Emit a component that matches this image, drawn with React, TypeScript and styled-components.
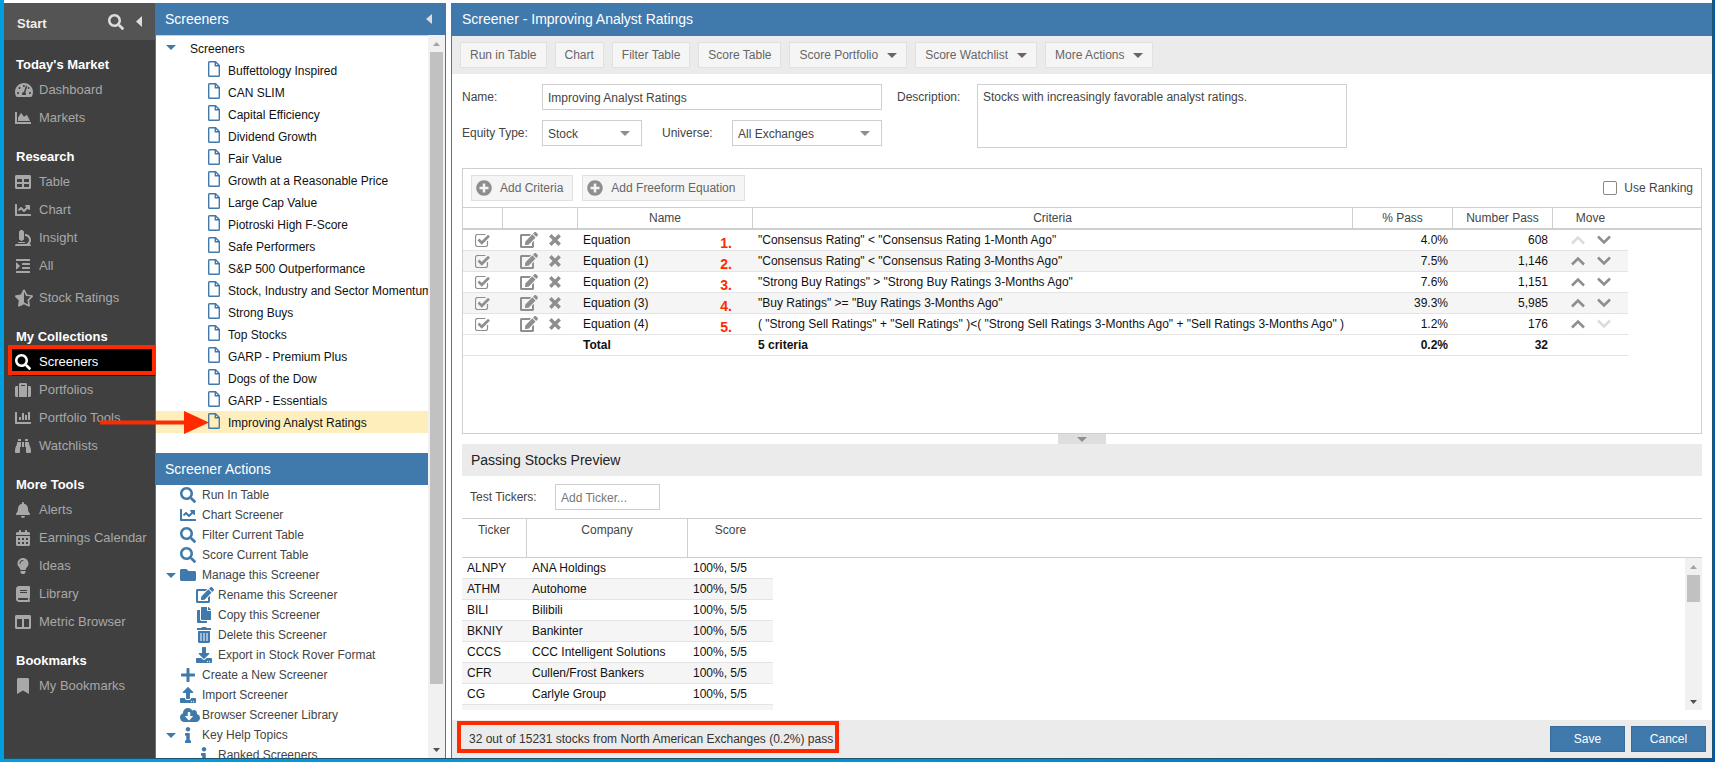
import React from "react";
import styled, { createGlobalStyle, css } from "styled-components";
import type { IconType } from "react-icons";
import {
  FaSearch, FaTachometerAlt, FaChartArea, FaTable, FaChartLine, FaMicroscope, FaIndent, FaStarHalfAlt,
  FaSuitcase, FaChartBar, FaBinoculars, FaBell, FaCalendarAlt, FaLightbulb, FaBook, FaColumns, FaBookmark,
  FaEdit, FaCopy, FaDownload, FaUpload, FaCloudDownloadAlt, FaInfo, FaPlus, FaFolder, FaPlusCircle,
} from "react-icons/fa";

const blue = "#4079ac";
const line = "#cfcfcf";
const red = "#ff2a00";

const GlobalStyle = createGlobalStyle`
  *, *::before, *::after { box-sizing: border-box; }
  body {
    margin: 0;
    overflow: hidden;
    font: 12px/20px "Liberation Sans", Arial, sans-serif;
    color: #444;
  }
  button, input, select, textarea { font: inherit; color: inherit; margin: 0; }
  svg { display: block; flex: none; }
`;

const Desktop = styled.div`
  height: 100vh;
  padding: 0 2px 3px 4px;
  background: linear-gradient(90deg, #009fe0, #0090cc 60%, #0058b0);
`;

const Window = styled.div`
  position: relative;
  height: 100%;
  display: grid;
  grid-template-columns: 151px 291px minmax(0, 1fr);
  padding-top: 3px;
  background: #fff;
  border: solid #1f5570;
  border-width: 0 1px 1px 0;
`;

/* Left navigation */

const Sidebar = styled.nav`
  position: relative;
  background: #404040;
  font-size: 13px;
`;

const StartBar = styled.div`
  height: 37px;
  display: flex;
  align-items: center;
  padding: 4px 13px 0 13px;
  background: #545454;
  color: #eee;
  font-weight: bold;
`;

const IconButton = styled.button`
  padding: 0;
  border: 0;
  background: none;
  color: #ddd;
  display: flex;
  cursor: pointer;
`;

const StartActions = styled.div`
  margin-left: auto;
  display: flex;
  align-items: center;
  gap: 12px;
  padding-bottom: 4px;
`;

const NavBody = styled.div`
  display: flex;
  flex-direction: column;
  gap: 14px;
  padding-top: 14px;
`;

const NavTitle = styled.h2`
  margin: 0;
  padding-left: 12px;
  font-size: 13px;
  line-height: 22px;
  color: #fff;
`;

const NavLink = styled.a<{ $active?: boolean; $spaced?: boolean }>`
  position: relative;
  height: 28px;
  display: flex;
  align-items: center;
  gap: 8px;
  margin-left: 8px;
  padding-left: 3px;
  color: #a8a8a8;
  text-decoration: none;
  white-space: nowrap;
  ${(p) => p.$spaced && css`margin-top: 4px;`}
  ${(p) => p.$active && css`background: #000; color: #fff;`}
`;

const HighlightBox = styled.span`
  position: absolute;
  border: 4px solid ${red};
  pointer-events: none;
`;

const NavHighlight = styled(HighlightBox)`
  inset: -3px -1px 1px -4px;
`;

const PointerArrow = styled.svg`
  position: absolute;
  left: 88px;
  top: 0;
  z-index: 1;
  pointer-events: none;
`;

/* Screener tree */

const TreePanel = styled.section`
  display: flex;
  flex-direction: column;
  min-height: 0;
  border: solid ${blue};
  border-width: 0 1px;
`;

const PanelTitle = styled.h2`
  margin: 0;
  height: 32px;
  flex: none;
  display: flex;
  align-items: center;
  justify-content: space-between;
  padding: 0 13px 0 9px;
  background: ${blue};
  color: #fff;
  font-size: 14px;
  font-weight: normal;
`;

const TreeScroll = styled.div`
  flex: 1;
  min-height: 0;
  display: grid;
  grid-template-columns: minmax(0, 1fr) 17px;
`;

const TreeContent = styled.div`
  min-height: 0;
  overflow: hidden;
  padding-top: 1px;
  border-top: 1px solid ${line};
`;

const TreeList = styled.ul`
  list-style: none;
  margin: 0;
  padding: 0 0 20px;
`;

const TreeRow = styled.li<{ $root?: boolean; $selected?: boolean }>`
  height: 22px;
  display: flex;
  align-items: center;
  gap: ${(p) => (p.$root ? 14 : 8)}px;
  padding-left: ${(p) => (p.$root ? 10 : 52)}px;
  background: ${(p) => (p.$selected ? "#feeebb" : "transparent")};
  color: #111;
  line-height: 22px;
  white-space: nowrap;
  & > svg { color: ${blue}; margin-bottom: 2px; }
`;

const TreeText = styled.span`
  padding-top: 1px;
`;

const ActionList = styled.ul`
  list-style: none;
  margin: 0;
  padding: 0;
`;

const ActionRow = styled.li<{ $depth: number }>`
  height: 20px;
  display: flex;
  align-items: center;
  padding-left: ${(p) => 10 + p.$depth * 16}px;
  white-space: nowrap;
`;

const Slot = styled.span<{ $w: number; $color?: string }>`
  width: ${(p) => p.$w}px;
  flex: none;
  display: flex;
  align-items: center;
  color: ${(p) => p.$color || "inherit"};
`;

const ActionLink = styled.a`
  padding-left: 6px;
  color: #444;
  text-decoration: none;
`;

const Track = styled.div`
  display: flex;
  flex-direction: column;
  align-items: center;
  background: #f1f1f1;
`;

const ArrowCell = styled.span<{ $down?: boolean }>`
  height: 17px;
  display: flex;
  align-items: center;
  color: ${(p) => (p.$down ? "#505050" : "#a3a3a3")};
`;

const Thumb = styled.span<{ $size: string }>`
  width: 13px;
  height: ${(p) => p.$size};
  margin-bottom: auto;
  background: #c1c1c1;
`;

/* Editor */

const Main = styled.main`
  display: flex;
  flex-direction: column;
  min-width: 0;
  min-height: 0;
  margin-left: 5px;
  border-left: 1px solid ${blue};
`;

const MainTitle = styled.h1`
  margin: 0;
  padding: 0 10px;
  flex: none;
  background: ${blue};
  color: #fff;
  font-size: 14px;
  font-weight: normal;
  line-height: 33px;
`;

const Toolbar = styled.div`
  height: 38px;
  flex: none;
  display: flex;
  align-items: center;
  gap: 8px;
  padding-left: 8px;
  background: #ebebeb;
`;

const ToolButton = styled.button`
  height: 26px;
  display: flex;
  align-items: center;
  gap: 9px;
  padding: 0 9px;
  border: 1px solid #e1e1e1;
  background: #f5f5f5;
  color: #666;
  white-space: nowrap;
  cursor: pointer;
`;

const AddButton = styled(ToolButton)`
  gap: 8px;
  padding: 0 9px 0 4px;
  & > svg { color: #8e8e8e; }
`;

const Form = styled.form`
  display: flex;
  align-items: flex-start;
  padding: 10px 10px 20px;
`;

const Fields = styled.div`
  display: grid;
  grid-template-columns: 80px 100px 90px 150px;
  row-gap: 10px;
`;

const FieldLabel = styled.label<{ $indent?: number; $w?: number }>`
  width: ${(p) => (p.$w ? `${p.$w}px` : "auto")};
  padding-left: ${(p) => p.$indent || 0}px;
  line-height: 26px;
`;

const TextInput = styled.input`
  height: 26px;
  min-width: 0;
  padding: 1px 5px 0;
  border: 1px solid ${line};
  background: #fff;
  outline: 0;
  &::placeholder { color: #777; opacity: 1; }
`;

const NameInput = styled(TextInput)`
  grid-column: 2 / -1;
`;

const TickerInput = styled(TextInput)`
  width: 105px;
`;

const SelectWrap = styled.span`
  position: relative;
  display: grid;
  & > svg {
    position: absolute;
    right: 12px;
    top: 11px;
    color: #8e8e8e;
    pointer-events: none;
  }
`;

const Select = styled.select`
  height: 26px;
  padding: 1px 5px 0;
  border: 1px solid ${line};
  border-radius: 0;
  background: #fff;
  appearance: none;
`;

const Description = styled.textarea`
  width: 370px;
  height: 64px;
  padding: 2px 5px;
  border: 1px solid ${line};
  resize: none;
  outline: 0;
`;

const CriteriaBox = styled.section`
  height: 266px;
  flex: none;
  margin: 0 10px;
  border: 1px solid ${line};
`;

const CriteriaBar = styled.div`
  height: 38px;
  display: flex;
  align-items: center;
  gap: 9px;
  padding: 0 8px;
`;

const Ranking = styled.label`
  display: flex;
  align-items: center;
  gap: 7px;
  margin-left: auto;
`;

const RankBox = styled.input`
  width: 14px;
  height: 14px;
  appearance: none;
  border: 1px solid #888;
  border-radius: 2px;
  background: #fff;
`;

const HeadBand = styled.div`
  height: 23px;
  margin-bottom: -23px;
  border-top: 1px solid ${line};
  border-bottom: 2px solid ${line};
`;

const Table = styled.table`
  position: relative;
  border-collapse: separate;
  border-spacing: 0;
  table-layout: fixed;
  color: #111;
  white-space: nowrap;
`;

const Th = styled.th<{ $h: number; $last?: boolean }>`
  height: ${(p) => p.$h}px;
  padding: 1px 0 0;
  border-right: ${(p) => (p.$last ? 0 : 1)}px solid ${line};
  color: #444;
  font-weight: normal;
  vertical-align: top;
`;

const Row = styled.tr`
  &:nth-child(even) { background: #f5f5f5; }
`;

const Td = styled.td<{ $right?: boolean; $bold?: boolean }>`
  position: relative;
  height: 21px;
  padding: 1px 5px 0;
  border-bottom: 1px solid #e4e4e4;
  line-height: 19px;
  text-align: ${(p) => (p.$right ? "right" : "left")};
  font-weight: ${(p) => (p.$bold ? "bold" : "normal")};
`;

const IconTd = styled(Td)`
  padding-top: 0;
`;

const Tools = styled.div<{ $gap: number; $pad: number }>`
  display: flex;
  align-items: center;
  gap: ${(p) => p.$gap}px;
  padding-left: ${(p) => p.$pad}px;
`;

const GreyButton = styled(IconButton)`
  color: #8e8e8e;
  &:disabled { color: #dcdcdc; }
`;

const Tick = styled.label`
  position: relative;
  display: flex;
  margin-left: 7px;
  color: #8e8e8e;
`;

const TickInput = styled.input`
  position: absolute;
  inset: 0;
  width: 15px;
  height: 13px;
  opacity: 0;
`;

const Marker = styled.span`
  position: absolute;
  right: 21px;
  top: 3px;
  color: ${red};
  font: bold 14px/20px "Liberation Sans", Arial, sans-serif;
`;

const SplitHandle = styled.button`
  align-self: center;
  flex: none;
  width: 48px;
  height: 10px;
  padding: 0;
  border: 0;
  background: #dedede;
  color: #8e8e8e;
  display: flex;
  align-items: center;
  justify-content: center;
`;

const PreviewTitle = styled.h2`
  flex: none;
  margin: 0 10px;
  padding: 0 9px;
  background: #ebebeb;
  color: #222;
  font-size: 14px;
  font-weight: normal;
  line-height: 32px;
`;

const TickerBar = styled.div`
  height: 42px;
  flex: none;
  display: grid;
  grid-template-columns: 85px auto;
  align-items: center;
  justify-content: start;
  padding-left: 18px;
`;

const Preview = styled.div`
  flex: 1;
  min-height: 0;
  margin: 0 10px 10px;
  display: grid;
  grid-template-rows: 40px minmax(0, 1fr);
`;

const PreviewHead = styled.div`
  border: solid ${line};
  border-width: 1px 0;
`;

const PreviewBody = styled.div`
  min-height: 0;
  display: grid;
  grid-template-columns: minmax(0, 1fr) 17px;
`;

const Clip = styled.div`
  min-height: 0;
  overflow: hidden;
`;

const Footer = styled.footer`
  height: 38px;
  flex: none;
  display: flex;
  align-items: center;
  gap: 6px;
  padding: 0 6px 0 17px;
  background: #ebebeb;
  color: #333;
`;

const Status = styled.span`
  position: relative;
  margin-right: auto;
`;

const StatusHighlight = styled(HighlightBox)`
  inset: -8px -6px -4px -12px;
`;

const PrimaryButton = styled.button`
  width: 75px;
  height: 26px;
  border: 1px solid #366d9f;
  background: ${blue};
  color: #fff;
  cursor: pointer;
`;

const Triangle = ({ dir = "down", w = 9, h = 5 }: { dir?: "down" | "up" | "left"; w?: number; h?: number }) => {
  const points = {
    down: `0,0 ${w},0 ${w / 2},${h}`,
    up: `0,${h} ${w},${h} ${w / 2},0`,
    left: `${w},0 ${w},${h} 0,${h / 2}`,
  }[dir];
  return (
    <svg width={w} height={h} viewBox={`0 0 ${w} ${h}`} fill="currentColor" aria-hidden="true">
      <polygon points={points} />
    </svg>
  );
};

const CheckIcon = () => (
  <svg width="15" height="13" viewBox="0 0 15 13" fill="none" stroke="currentColor" aria-hidden="true">
    <path d="M12.5 7v3.5a2 2 0 0 1-2 2h-8a2 2 0 0 1-2-2v-8a2 2 0 0 1 2-2h8" strokeWidth="1.2" />
    <path d="M3.5 5.5 6.8 8.8 14 1.8" strokeWidth="2.6" />
  </svg>
);

const CrossIcon = () => (
  <svg width="12" height="12" viewBox="0 0 12 12" fill="none" stroke="currentColor" strokeWidth="3.4" aria-hidden="true">
    <path d="M1.300 1.300 10.700 10.700M10.700 1.300 1.300 10.700" />
  </svg>
);

const Chevron = ({ up }: { up?: boolean }) => (
  <svg width="14" height="10" viewBox="0 0 14 10" fill="none" stroke="currentColor" strokeWidth="2.6" aria-hidden="true">
    <path d={up ? "M1 8.500 7 2.500 13 8.500" : "M1 1.500 7 7.500 13 1.500"} />
  </svg>
);

const FileIcon = () => (
  <svg width="12" height="16" viewBox="0 0 12 16" fill="none" stroke="currentColor" strokeWidth="1.4" aria-hidden="true">
    <path d="M1.500.7H7.500L11.300 4.500V14.500Q11.300 15.300 10.500 15.300H1.500Q.7 15.300.7 14.500V1.500Q.7.700 1.500.700Z" />
    <path d="M7.300.7V4.700H11.300" />
  </svg>
);

const TrashIcon = () => (
  <svg width="16" height="16" viewBox="-1 0 16 16" fill="currentColor" aria-hidden="true">
    <path fillRule="evenodd" d="M5 0h4l.6 1H14v2H0V1h4.400zM1 4h12v10.500a1.500 1.500 0 0 1-1.500 1.500h-9A1.500 1.500 0 0 1 1 14.500zM3.500 6v8h1V6zM6.500 6v8h1V6zM9.500 6v8h1V6z" />
  </svg>
);

const Scrollbar = ({ size }: { size: string }) => (
  <Track aria-hidden="true">
    <ArrowCell><Triangle dir="up" w={7} h={4} /></ArrowCell>
    <Thumb $size={size} />
    <ArrowCell $down><Triangle w={7} h={4} /></ArrowCell>
  </Track>
);

type NavItem = { label: string; icon: IconType; size?: number; active?: boolean; spaced?: boolean };

const nav: { title: string; items: NavItem[] }[] = [
  { title: "Today's Market", items: [
    { label: "Dashboard", icon: FaTachometerAlt, size: 18 },
    { label: "Markets", icon: FaChartArea },
  ] },
  { title: "Research", items: [
    { label: "Table", icon: FaTable },
    { label: "Chart", icon: FaChartLine },
    { label: "Insight", icon: FaMicroscope },
    { label: "All", icon: FaIndent },
    { label: "Stock Ratings", icon: FaStarHalfAlt, size: 18, spaced: true },
  ] },
  { title: "My Collections", items: [
    { label: "Screeners", icon: FaSearch, active: true },
    { label: "Portfolios", icon: FaSuitcase },
    { label: "Portfolio Tools", icon: FaChartBar },
    { label: "Watchlists", icon: FaBinoculars },
  ] },
  { title: "More Tools", items: [
    { label: "Alerts", icon: FaBell },
    { label: "Earnings Calendar", icon: FaCalendarAlt },
    { label: "Ideas", icon: FaLightbulb },
    { label: "Library", icon: FaBook },
    { label: "Metric Browser", icon: FaColumns },
  ] },
  { title: "Bookmarks", items: [{ label: "My Bookmarks", icon: FaBookmark }] },
];

const screeners = [
  "Buffettology Inspired", "CAN SLIM", "Capital Efficiency", "Dividend Growth", "Fair Value",
  "Growth at a Reasonable Price", "Large Cap Value", "Piotroski High F-Score", "Safe Performers",
  "S&P 500 Outperformance", "Stock, Industry and Sector Momentum", "Strong Buys", "Top Stocks",
  "GARP - Premium Plus", "Dogs of the Dow", "GARP - Essentials", "Improving Analyst Ratings",
];

const actions: { label: string; icon: React.ComponentType<{ size?: number }>; depth?: number; open?: boolean; size?: number }[] = [
  { label: "Run In Table", icon: FaSearch },
  { label: "Chart Screener", icon: FaChartLine },
  { label: "Filter Current Table", icon: FaSearch },
  { label: "Score Current Table", icon: FaSearch },
  { label: "Manage this Screener", icon: FaFolder, open: true },
  { label: "Rename this Screener", icon: FaEdit, depth: 1, size: 18 },
  { label: "Copy this Screener", icon: FaCopy, depth: 1 },
  { label: "Delete this Screener", icon: TrashIcon, depth: 1 },
  { label: "Export in Stock Rover Format", icon: FaDownload, depth: 1 },
  { label: "Create a New Screener", icon: FaPlus },
  { label: "Import Screener", icon: FaUpload },
  { label: "Browser Screener Library", icon: FaCloudDownloadAlt, size: 20 },
  { label: "Key Help Topics", icon: FaInfo, open: true },
  { label: "Ranked Screeners", icon: FaInfo, depth: 1 },
];

const tools: { label: string; menu?: boolean }[] = [
  { label: "Run in Table" },
  { label: "Chart" },
  { label: "Filter Table" },
  { label: "Score Table" },
  { label: "Score Portfolio", menu: true },
  { label: "Score Watchlist", menu: true },
  { label: "More Actions", menu: true },
];

const criteria = [
  ["Equation", '"Consensus Rating" < "Consensus Rating 1-Month Ago"', "4.0%", "608"],
  ["Equation (1)", '"Consensus Rating" < "Consensus Rating 3-Months Ago"', "7.5%", "1,146"],
  ["Equation (2)", '"Strong Buy Ratings" > "Strong Buy Ratings 3-Months Ago"', "7.6%", "1,151"],
  ["Equation (3)", '"Buy Ratings" >= "Buy Ratings 3-Months Ago"', "39.3%", "5,985"],
  ["Equation (4)", '( "Strong Sell Ratings" + "Sell Ratings" )<( "Strong Sell Ratings 3-Months Ago" + "Sell Ratings 3-Months Ago" )', "1.2%", "176"],
];

const stocks = [
  ["ALNPY", "ANA Holdings"], ["ATHM", "Autohome"], ["BILI", "Bilibili"], ["BKNIY", "Bankinter"],
  ["CCCS", "CCC Intelligent Solutions"], ["CFR", "Cullen/Frost Bankers"], ["CG", "Carlyle Group"],
];

const criteriaCols = [40, 75, 175, 600, 100, 100, 75];
const previewCols = [65, 161, 85];

const Cols = ({ widths }: { widths: number[] }) => (
  <colgroup>
    {widths.map((w, i) => <col key={i} width={w} />)}
  </colgroup>
);

const sum = (widths: number[]) => widths.reduce((a, b) => a + b, 0);

const Navigation = () => (
  <Sidebar>
    <StartBar>
      Start
      <StartActions>
        <IconButton aria-label="Search"><FaSearch size={16} /></IconButton>
        <IconButton aria-label="Collapse menu"><Triangle dir="left" w={6} h={11} /></IconButton>
      </StartActions>
    </StartBar>
    <NavBody>
      {nav.map((section) => (
        <div key={section.title}>
          <NavTitle>{section.title}</NavTitle>
          {section.items.map(({ label, icon: Icon, size = 16, active, spaced }) => (
            <NavLink key={label} href="#" $active={active} $spaced={spaced}>
              <Slot $w={16}><Icon size={size} /></Slot>
              {label}
              {active && <NavHighlight />}
              {label === "Portfolio Tools" && (
                <PointerArrow width="110" height="32" viewBox="0 0 110 32" fill={red} aria-hidden="true">
                  <path d="M0 16.500h84V7l25 11.500L84 30v-9.500H0z" />
                </PointerArrow>
              )}
            </NavLink>
          ))}
        </div>
      ))}
    </NavBody>
  </Sidebar>
);

const ScreenerTree = () => (
  <TreePanel>
    <PanelTitle>
      Screeners
      <IconButton aria-label="Collapse panel"><Triangle dir="left" w={6} h={10} /></IconButton>
    </PanelTitle>
    <TreeScroll>
      <TreeContent>
        <TreeList>
          <TreeRow $root><Triangle w={10} h={5} /><TreeText>Screeners</TreeText></TreeRow>
          {screeners.map((name) => (
            <TreeRow key={name} $selected={name === "Improving Analyst Ratings"}>
              <FileIcon />
              <TreeText>{name}</TreeText>
            </TreeRow>
          ))}
        </TreeList>
        <PanelTitle>Screener Actions</PanelTitle>
        <ActionList>
          {actions.map(({ label, icon: Icon, depth = 0, open, size = 16 }) => (
            <ActionRow key={label} $depth={depth}>
              <Slot $w={14} $color={blue}>{open && <Triangle w={10} h={5} />}</Slot>
              <Slot $w={16} $color={blue}><Icon size={size} /></Slot>
              <ActionLink href="#">{label}</ActionLink>
            </ActionRow>
          ))}
        </ActionList>
      </TreeContent>
      <Scrollbar size="632px" />
    </TreeScroll>
  </TreePanel>
);

const CriteriaTable = () => (
  <>
    <HeadBand />
    <Table style={{ width: sum(criteriaCols) }}>
      <Cols widths={criteriaCols} />
      <thead>
        <tr>
          {["", "", "Name", "Criteria", "% Pass", "Number Pass", "Move"].map((text, i) => (
            <Th key={i} $h={23} $last={i === 6}>{text}</Th>
          ))}
        </tr>
      </thead>
      <tbody>
        {criteria.map(([name, rule, pass, count], i) => (
          <Row key={name}>
            <IconTd>
              <Tick aria-label={`Use ${name}`}>
                <TickInput type="checkbox" defaultChecked />
                <CheckIcon />
              </Tick>
            </IconTd>
            <IconTd>
              <Tools $gap={11} $pad={12}>
                <GreyButton aria-label="Edit"><FaEdit size={18} /></GreyButton>
                <GreyButton aria-label="Delete"><CrossIcon /></GreyButton>
              </Tools>
            </IconTd>
            <Td>{name}<Marker>{i + 1}.</Marker></Td>
            <Td>{rule}</Td>
            <Td $right>{pass}</Td>
            <Td $right>{count}</Td>
            <IconTd>
              <Tools $gap={12} $pad={13}>
                <GreyButton aria-label="Move up" disabled={i === 0}><Chevron up /></GreyButton>
                <GreyButton aria-label="Move down" disabled={i === criteria.length - 1}><Chevron /></GreyButton>
              </Tools>
            </IconTd>
          </Row>
        ))}
        <tr>
          <Td /><Td />
          <Td $bold>Total</Td>
          <Td $bold>5 criteria</Td>
          <Td $right $bold>0.2%</Td>
          <Td $right $bold>32</Td>
          <Td />
        </tr>
      </tbody>
    </Table>
  </>
);

const PreviewTable = () => (
  <Preview>
    <PreviewHead>
      <Table style={{ width: sum(previewCols) }}>
        <Cols widths={previewCols} />
        <thead>
          <tr>
            {["Ticker", "Company", "Score"].map((text, i) => <Th key={text} $h={38} $last={i === 2}>{text}</Th>)}
          </tr>
        </thead>
      </Table>
    </PreviewHead>
    <PreviewBody>
      <Clip>
        <Table style={{ width: sum(previewCols) }}>
          <Cols widths={previewCols} />
          <tbody>
            {stocks.map(([ticker, company]) => (
              <Row key={ticker}>
                <Td>{ticker}</Td>
                <Td>{company}</Td>
                <Td>100%, 5/5</Td>
              </Row>
            ))}
            <Row><Td /><Td /><Td /></Row>
          </tbody>
        </Table>
      </Clip>
      <Scrollbar size="27px" />
    </PreviewBody>
  </Preview>
);

export default function App() {
  return (
    <>
      <GlobalStyle />
      <Desktop>
        <Window>
          <Navigation />
          <ScreenerTree />
          <Main>
            <MainTitle>Screener - Improving Analyst Ratings</MainTitle>
            <Toolbar>
              {tools.map(({ label, menu }) => (
                <ToolButton key={label}>
                  {label}
                  {menu && <Triangle w={10} h={5} />}
                </ToolButton>
              ))}
            </Toolbar>
            <Form>
              <Fields>
                <FieldLabel htmlFor="name">Name:</FieldLabel>
                <NameInput id="name" defaultValue="Improving Analyst Ratings" />
                <FieldLabel htmlFor="type">Equity Type:</FieldLabel>
                <SelectWrap>
                  <Select id="type"><option>Stock</option></Select>
                  <Triangle w={10} h={5} />
                </SelectWrap>
                <FieldLabel htmlFor="universe" $indent={20}>Universe:</FieldLabel>
                <SelectWrap>
                  <Select id="universe"><option>All Exchanges</option></Select>
                  <Triangle w={10} h={5} />
                </SelectWrap>
              </Fields>
              <FieldLabel htmlFor="description" $indent={15} $w={95}>Description:</FieldLabel>
              <Description id="description" defaultValue="Stocks with increasingly favorable analyst ratings." />
            </Form>
            <CriteriaBox>
              <CriteriaBar>
                <AddButton><FaPlusCircle size={16} />Add Criteria</AddButton>
                <AddButton><FaPlusCircle size={16} />Add Freeform Equation</AddButton>
                <Ranking><RankBox type="checkbox" />Use Ranking</Ranking>
              </CriteriaBar>
              <CriteriaTable />
            </CriteriaBox>
            <SplitHandle aria-label="Collapse preview"><Triangle w={10} h={5} /></SplitHandle>
            <PreviewTitle>Passing Stocks Preview</PreviewTitle>
            <TickerBar>
              <FieldLabel htmlFor="ticker">Test Tickers:</FieldLabel>
              <TickerInput id="ticker" placeholder="Add Ticker..." />
            </TickerBar>
            <PreviewTable />
            <Footer>
              <Status>
                32 out of 15231 stocks from North American Exchanges (0.2%) pass
                <StatusHighlight />
              </Status>
              <PrimaryButton>Save</PrimaryButton>
              <PrimaryButton>Cancel</PrimaryButton>
            </Footer>
          </Main>
        </Window>
      </Desktop>
    </>
  );
}
